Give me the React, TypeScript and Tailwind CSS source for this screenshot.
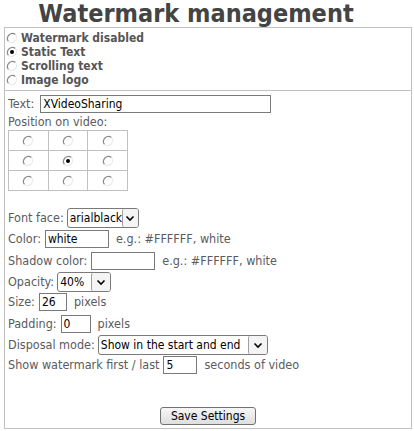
import React from "react";

const FONT = { fontFamily: '"DejaVu Sans Condensed", "DejaVu Sans", sans-serif' };

function Radio({ checked = false }: { checked?: boolean }) {
  return (
    <svg width="12" height="12" viewBox="0 0 12 12" className="shrink-0">
      <circle cx="6" cy="6" r="5" fill="#fff" />
      <path d="M9.5 2.5 A5 5 0 0 0 2.5 9.5" stroke="#8a8a8a" strokeWidth="1.2" fill="none" />
      <path d="M2.5 9.5 A5 5 0 0 0 9.5 2.5" stroke="#ececec" strokeWidth="1.2" fill="none" />
      {checked && <circle cx="6" cy="6" r="2" fill="#000" />}
    </svg>
  );
}

function Chevron() {
  return (
    <svg width="10" height="7" viewBox="0 0 10 7">
      <path d="M1.5 1.5 L5 5 L8.5 1.5" stroke="#000" strokeWidth="1.6" fill="none" />
    </svg>
  );
}

function Select({ value, width }: { value: string; width: string }) {
  return (
    <div className={`flex h-[20px] items-stretch rounded-[3px] border border-[#7a7a7a] bg-white ${width}`}>
      <div className="flex flex-1 items-center pl-[2px] text-[12px] text-black">{value}</div>
      <div className="flex w-[19px] items-center justify-center rounded-[2px] border-l border-[#a0a0a0] bg-[#f4f4f4]">
        <Chevron />
      </div>
    </div>
  );
}

function Input({ value, width }: { value: string; width: string }) {
  return (
    <div className={`flex h-[18px] items-center border border-[#7a7a7a] bg-white pl-[2px] text-[12px] text-black ${width}`}>
      {value}
    </div>
  );
}

export default function App() {
  return (
    <div className="w-[414px] h-[431px] bg-white text-[12.5px] text-[#5a5a60]" style={FONT}>
      <div className="h-[27px] pr-[22px] text-center text-[25px] font-bold leading-[28px] text-[#444]">
        Watermark management
      </div>
      <div className="ml-[4px] h-[402px] w-[408px] border border-[#c0c0c0] flex flex-col">
        <div className="flex flex-col pl-[1px] pt-[3px] pb-[3px] text-[12px] font-bold leading-[14px] text-[#555]">
          <div className="flex items-center gap-[3px]"><Radio /><span>Watermark disabled</span></div>
          <div className="flex items-center gap-[3px]"><Radio checked /><span>Static Text</span></div>
          <div className="flex items-center gap-[3px]"><Radio /><span>Scrolling text</span></div>
          <div className="flex items-center gap-[3px]"><Radio /><span>Image logo</span></div>
        </div>
        <div className="h-px bg-[#c0c0c0]" />
        <div className="flex flex-col px-[3px]">
          <div className="mt-[4px] flex h-[18px] items-center gap-[6px]">
            <span>Text:</span>
            <Input value="XVideoSharing" width="w-[231px]" />
          </div>
          <div className="mt-[1px] h-[16px] leading-[16px]">Position on video:</div>
          <div className="grid w-[120px] grid-cols-3 border-l border-t border-[#c0c0c0]">
            {[0, 1, 2, 3, 4, 5, 6, 7, 8].map((i) => (
              <div key={i} className="flex h-[20px] items-center justify-center border-b border-r border-[#c0c0c0]">
                <Radio checked={i === 4} />
              </div>
            ))}
          </div>
          <div className="mt-[17px] flex h-[20px] items-center gap-[3px]">
            <span>Font face:</span>
            <Select value="arialblack" width="w-[72px]" />
          </div>
          <div className="mt-[2px] flex h-[18px] items-center gap-[4px]">
            <span>Color:</span>
            <Input value="white" width="w-[64px]" />
            <span className="ml-[3px]">e.g.: #FFFFFF, white</span>
          </div>
          <div className="mt-[4px] flex h-[18px] items-center gap-[4px]">
            <span>Shadow color:</span>
            <Input value="" width="w-[64px]" />
            <span className="ml-[3px]">e.g.: #FFFFFF, white</span>
          </div>
          <div className="mt-[2px] flex h-[20px] items-center gap-[3px]">
            <span>Opacity:</span>
            <Select value="40%" width="w-[54px]" />
          </div>
          <div className="mt-[1px] flex h-[18px] items-center gap-[4px]">
            <span>Size:</span>
            <Input value="26" width="w-[28px]" />
            <span className="ml-[3px]">pixels</span>
          </div>
          <div className="mt-[4px] flex h-[18px] items-center gap-[4px]">
            <span>Padding:</span>
            <Input value="0" width="w-[30px]" />
            <span className="ml-[3px]">pixels</span>
          </div>
          <div className="mt-[2px] flex h-[20px] items-center gap-[3px]">
            <span>Disposal mode:</span>
            <Select value="Show in the start and end" width="w-[170px]" />
          </div>
          <div className="mt-[1px] flex h-[18px] items-center gap-[4px]">
            <span>Show watermark first / last</span>
            <Input value="5" width="w-[34px]" />
            <span className="ml-[3px]">seconds of video</span>
          </div>
          <div className="mt-[33px] flex justify-center">
            <div className="flex h-[18px] w-[96px] items-center justify-center rounded-[3px] border border-[#707070] bg-gradient-to-b from-[#f6f6f6] to-[#dedede] text-[12px] text-black">
              Save Settings
            </div>
          </div>
        </div>
      </div>
    </div>
  );
}
